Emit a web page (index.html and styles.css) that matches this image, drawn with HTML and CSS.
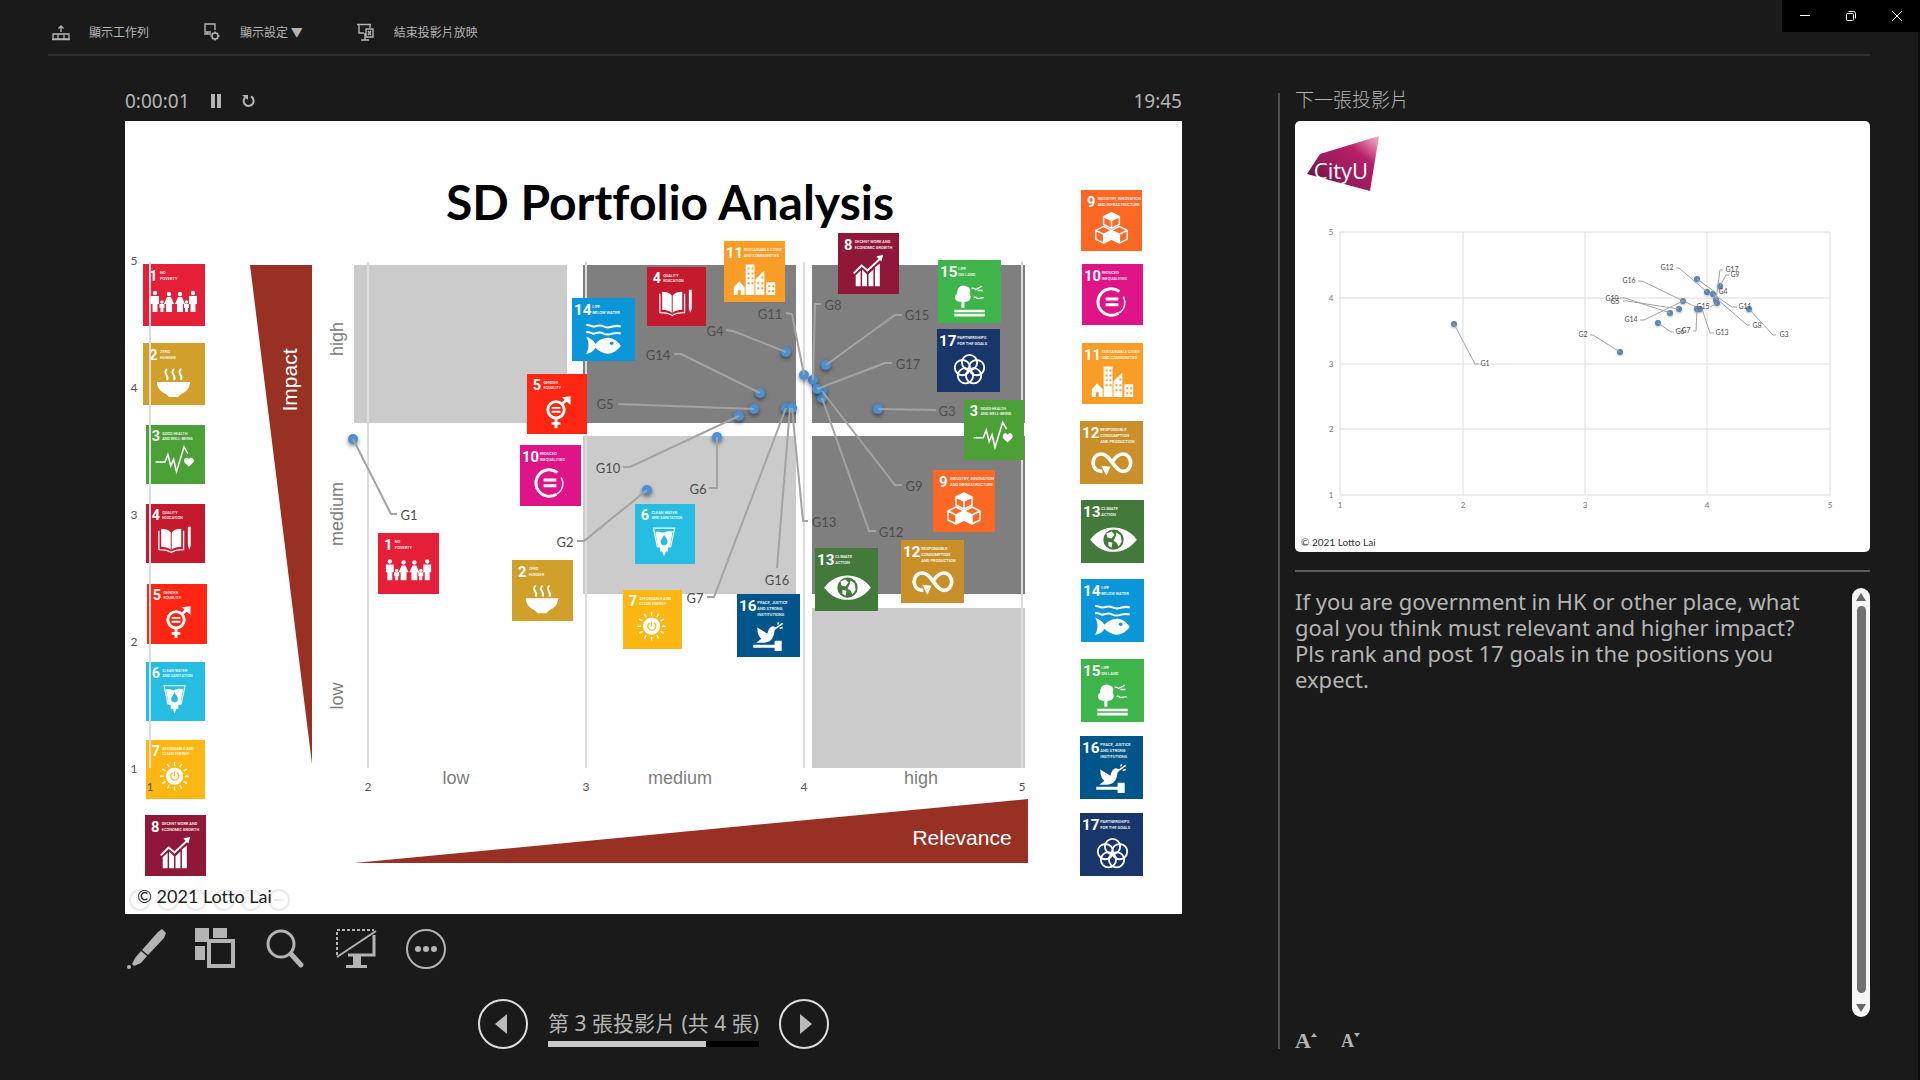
FILE: index.html
```html
<!DOCTYPE html>
<html lang="zh-Hant">
<head>
    <meta charset="UTF-8">
    <meta name="viewport" content="width=device-width, initial-scale=1.0">
    <title>SD Portfolio Analysis</title>
    <link rel="stylesheet" href="styles.css">
</head>
<body>
    <!-- Goal pictograms, each drawn on a 62 x 62 tile -->
    <svg class="sprites" aria-hidden="true">
        <symbol id="goal-1" viewBox="0 0 62 62">
            <g fill="#fff">
                <circle cx="12" cy="29" r="2.2"/><circle cx="26" cy="30" r="2.2"/><circle cx="37" cy="30" r="2.2"/><circle cx="50" cy="29" r="2.2"/>
                <circle cx="19" cy="38" r="1.7"/><circle cx="43.500" cy="38" r="1.700"/>
                <path d="M8 32h8v8h-1.500v8h-5v-8H8zM24 33h4l3 7h-2v8h-6v-8h-2zM35 33h4l3 7h-2v8h-6v-8h-2zM46 32h8v8h-1.500v8h-5v-8H46zM16.500 40h5v4h-1v4h-3v-4h-1zM41 40h5v4h-1v4h-3v-4h-1z"/>
            </g>
        </symbol>
        <symbol id="goal-2" viewBox="0 0 62 62">
            <path fill="#fff" d="M14 39h33c0 6-4 10-9 12l-3 3h-9l-3-3c-5-2-9-6-9-12z"/>
            <path fill="none" stroke="#fff" stroke-width="2" d="M24 26c-5 5 3 6 0 11M31 26c-5 5 3 6 0 11M38 26c-5 5 3 6 0 11"/>
        </symbol>
        <symbol id="goal-3" viewBox="0 0 62 62">
            <path fill="none" stroke="#fff" stroke-width="1.600" d="M10 39h10l3-8 3 12 3-7 3 13 8-26 4 7"/>
            <path fill="#fff" d="M45 44l-4-4c-3-4 2-8 4-4 2-4 8 0 4 4z"/>
        </symbol>
        <symbol id="goal-4" viewBox="0 0 62 62">
            <path fill="#fff" d="M16 26c4 0 8 1 10 4v18c-3-2-6-3-10-3zM37 26c-4 0-8 1-10 4v18c3-2 6-3 10-3zM44 24h3v20l-1.500 4-1.500-4z"/>
            <path fill="none" stroke="#fff" stroke-width="1.400" d="M13.500 28v20c5 0 9 0 13 3 4-3 8-3 13-3V28"/>
        </symbol>
        <symbol id="goal-5" viewBox="0 0 62 62">
            <g fill="none" stroke="#fff" stroke-width="3">
                <circle cx="30" cy="37" r="8.500"/>
                <path d="M36 31l7-6M30 46v10M25.500 51h9"/>
            </g>
            <path fill="#fff" d="M36 24l9-1v9zM25.500 34h9v2h-9zM25.500 38h9v2h-9z"/>
        </symbol>
        <symbol id="goal-6" viewBox="0 0 62 62">
            <path fill="none" stroke="#fff" stroke-width="1.200" d="M19 25h22l-4 19H23z"/>
            <path fill="#fff" d="M21 29c4-2 6 2 10 0s5 0 8-1l-3 17h-2v4h-2l-2 5-2-5h-2v-4h-2z"/>
            <path fill="#26bde2" d="M30 32c2 3 4 5 3.500 7a3.500 3.500 0 0 1-7 0c0-2 2-4 3.500-7z"/>
        </symbol>
        <symbol id="goal-7" viewBox="0 0 62 62">
            <circle cx="30" cy="38" r="9" fill="#fff"/>
            <g fill="none" stroke="#fcb713" stroke-width="1.300"><path d="M28 34.500a4.200 4.200 0 1 0 4.500 0M30 33v5"/></g>
            <path stroke="#fff" stroke-width="1.500" d="M30 27v-4M30 49v4M19 38h-4M41 38h4M24.500 28.500l-2-3.500M35.500 28.500l2-3.500M24.500 47.500l-2 3.500M35.500 47.500l2 3.500M20.500 32.500l-3.500-2M39.500 32.500l3.500-2M20.500 43.500l-3.500 2M39.500 43.500l3.500 2"/>
        </symbol>
        <symbol id="goal-8" viewBox="0 0 62 62">
            <path fill="#fff" d="M18 43l5-5v16h-5zM24.500 37l5 5v12h-5zM31 42l5-5v17h-5zM37.500 35l5-4v23h-5z"/>
            <path fill="none" stroke="#fff" stroke-width="2" d="M16 41l8-8 6 5 13-12"/>
            <path fill="#fff" d="M39 24l7-2-2 7z"/>
        </symbol>
        <symbol id="goal-9" viewBox="0 0 62 62">
            <g fill="none" stroke="#fff" stroke-width="1.500" stroke-linejoin="round">
                <path d="M31 23l8 4v8l-8 4-8-4v-8zM23 27l8 4 8-4M31 31v8M23 37l8 4v9l-8 4-8-4v-9zM15 41l8 4 8-4M23 45v9M39 37l8 4v9l-8 4-8-4v-9zM31 41l8 4 8-4M39 45v9"/>
            </g>
            <path fill="#fff" d="M31 23l8 4-8 4-8-4zM23 45l8-4v9l-8 4zM31 41l8 4v9l-8-4z"/>
        </symbol>
        <symbol id="goal-10" viewBox="0 0 62 62">
            <path fill="none" stroke="#fff" stroke-width="3" d="M38 28a13.500 13.500 0 1 0-1 22"/>
            <path fill="none" stroke="#fff" stroke-width="1.500" d="M37 50c7-4 8-11 5-17"/>
            <path fill="#fff" d="M24 34h13v3H24zM24 40h13v3H24z"/>
        </symbol>
        <symbol id="goal-11" viewBox="0 0 62 62">
            <path fill="#fff" fill-rule="evenodd" d="M10 47l5.500-6 5.500 6v8h-4v-5h-3v5h-4zM22 24h9v31h-9zM32 39l9-9v25h-9zM43 42h9v13h-9zM24 27v2h2v-2zM28 27v2h2v-2zM24 32v2h2v-2zM28 32v2h2v-2zM24 37v2h2v-2zM28 37v2h2v-2zM24 42v2h2v-2zM28 42v2h2v-2zM34 42v2h2v-2zM38 42v2h2v-2zM34 47v2h2v-2zM38 47v2h2v-2zM38 36v2h2v-2zM45 45v2h2v-2zM49 45v2h2v-2zM45 50v2h2v-2zM49 50v2h2v-2z"/>
        </symbol>
        <symbol id="goal-12" viewBox="0 0 62 62">
            <path fill="none" stroke="#fff" stroke-width="3.600" d="M22 49.500c-12 1-12-17-1-17 9 0 13 17 21 17 11 0 10-17 0-17-5 0-8 4-11 9"/>
            <path fill="#fff" d="M21 44l9 1-4 9z"/>
        </symbol>
        <symbol id="goal-13" viewBox="0 0 62 62">
            <path fill="#fff" d="M9 39c12-16 34-16 46 0-12 16-34 16-46 0z"/>
            <circle cx="32" cy="39" r="10" fill="#44793c"/>
            <path fill="#fff" d="M25 33l5-2 3 3-3 4-4-1zM35 32l4 3 1 6-3 5-2-4-3-2 2-4zM27 41l4 1-1 5-3-2z"/>
        </symbol>
        <symbol id="goal-14" viewBox="0 0 62 62">
            <path fill="none" stroke="#fff" stroke-width="2" d="M14 27c3-2 4 2 8 1s5-2 9 0 5 1 9 0 5-1 8 0M14 34c3-2 4 2 8 1s5-2 9 0 5 1 9 0 5-1 8 0"/>
            <path fill="#fff" d="M14 38c5 2 8 5 9 7 8-8 18-8 25 2-7 10-17 10-25 2-1 3-4 5-9 6 3-6 3-11 0-17z"/>
            <circle cx="39" cy="44.500" r="1.800" fill="#0a97d9"/>
        </symbol>
        <symbol id="goal-15" viewBox="0 0 62 62">
            <path fill="#fff" d="M23 47v-6c-7 1-8-6-4-8-1-6 5-10 9-7 5 1 4 6 3 7 3 4 0 9-5 8v6zM16 49h30v2.500H16zM16 53h30v2.500H16z"/>
            <path fill="none" stroke="#fff" stroke-width="1.300" d="M33 28c2-1 3 0 4 1l6-3M35 37c2-1 3 0 4 1l6-1M39 30l5 0"/>
        </symbol>
        <symbol id="goal-16" viewBox="0 0 62 62">
            <path fill="#fff" d="M20 33l10 6c1-5 4-8 6-7l4 1-3 3c-1 9-5 12-11 12h-7l5-4c-3-2-4-6-4-11zM16 50h21v-4h7v10h-7v-3H16z"/>
            <path fill="none" stroke="#fff" stroke-width="1.500" d="M39 33l6-4M42 34l3-1M40 30l1-2"/>
        </symbol>
        <symbol id="goal-17" viewBox="0 0 62 62">
            <g fill="none" stroke="#fff" stroke-width="1.800">
                <circle cx="32" cy="33" r="7.500"/><circle cx="39" cy="38" r="7.500"/><circle cx="36" cy="46" r="7.500"/><circle cx="28" cy="46" r="7.500"/><circle cx="25" cy="38" r="7.500"/>
            </g>
        </symbol>
    </svg>

    <header class="topbar">
        <nav class="commands">
            <button class="command">
                <svg width="18" height="18" viewBox="0 0 18 18" fill="none" stroke="currentColor"><path stroke-width="1.300" d="M1 11h16v5H1zM6 11v5M12 11v5M0 16.500h18M9 9V3M6.500 5.500L9 3l2.500 2.500"/></svg>
                <span>顯示工作列</span>
            </button>
            <button class="command">
                <svg width="18" height="18" viewBox="0 0 18 18" fill="none" stroke="currentColor" stroke-width="1.400"><path d="M8 9H2V1h10v6M1 11h7M4 9v2"/><circle cx="12" cy="13" r="3"/><path stroke-width="1.600" d="M12 8.500v1.500M12 16v1.500M7.500 13H9M15 13h1.500M9 10l1 1M14 15l1 1M15 10l-1 1M10 15l-1 1"/></svg>
                <span>顯示設定 ▼</span>
            </button>
            <button class="command">
                <svg width="18" height="18" viewBox="0 0 18 18" fill="none" stroke="currentColor" stroke-width="1.400"><path d="M0 1.500h14M2 2v8h5M13 2v3M4 17h8M8 10v7M9 6h7v8H9zM11 8l3 4M14 8l-3 4"/></svg>
                <span>結束投影片放映</span>
            </button>
        </nav>
        <div class="window-buttons">
            <button aria-label="最小化"><svg width="12" height="12" viewBox="0 0 12 12"><path d="M1 5.500h10" stroke="#fff"/></svg></button>
            <button aria-label="還原"><svg width="12" height="12" viewBox="0 0 12 12" fill="none" stroke="#fff"><rect x="1.500" y="3.500" width="7" height="7" rx="1"/><path d="M3.500 1.500h5a2 2 0 0 1 2 2v5"/></svg></button>
            <button aria-label="關閉"><svg width="12" height="12" viewBox="0 0 12 12"><path d="M1 1l10 10M11 1L1 11" stroke="#fff"/></svg></button>
        </div>
    </header>

    <main class="presenter">
        <section class="current">
            <div class="status">
                <span>0:00:01</span>
                <button aria-label="暫停"><svg width="10" height="14" viewBox="0 0 10 14"><path fill="currentColor" d="M0 0h4v14H0zM6 0h4v14H6z"/></svg></button>
                <button aria-label="重新開始"><svg width="14" height="14" viewBox="0 0 14 14" fill="none" stroke="currentColor" stroke-width="2"><path d="M9 2.500a5 5 0 1 1-6 1"/><path fill="currentColor" stroke="none" d="M0 1h6v5z"/></svg></button>
                <span class="clock">19:45</span>
            </div>

            <svg class="slide" id="slide" viewBox="0 0 1057 793">
                <g class="ghost">
                    <circle cx="15" cy="779" r="10"/><circle cx="43" cy="779" r="10"/><circle cx="71" cy="779" r="10"/>
                    <circle cx="99" cy="779" r="10"/><circle cx="126" cy="779" r="10"/><circle cx="154" cy="779" r="10"/>
                    <path d="M149 779h10"/>
                </g>
                <text class="slide-title" x="545" y="99">SD Portfolio Analysis</text>
                <text class="copyright" x="12" y="782">© 2021 Lotto Lai</text>

                <g class="zone-light">
                    <rect x="229" y="144" width="213" height="158"/>
                    <rect x="458" y="315" width="213" height="158"/>
                    <rect x="687" y="487" width="213" height="160"/>
                </g>
                <g class="zone-dark">
                    <rect x="458" y="144" width="213" height="158"/>
                    <rect x="687" y="144" width="213" height="158"/>
                    <rect x="687" y="315" width="213" height="158"/>
                </g>
                <path class="wedge" d="M125 144h62v499zM229 742l674-64v64z"/>
                <text class="wedge-label" transform="translate(172 259) rotate(-90)">Impact</text>
                <text class="wedge-label" x="837" y="724">Relevance</text>

                <g class="band">
                    <text x="331" y="663">low</text>
                    <text x="555" y="663">medium</text>
                    <text x="796" y="663">high</text>
                    <text transform="translate(218 218) rotate(-90)">high</text>
                    <text transform="translate(218 393) rotate(-90)">medium</text>
                    <text transform="translate(218 575) rotate(-90)">low</text>
                </g>
                <g id="side-goals"></g>
                <path class="grid-line" d="M25 141v506M243 141v506M461 141v506M679 141v506M897 141v506"/>
                <g class="axis">
                    <text x="9" y="144">5</text><text x="9" y="271">4</text><text x="9" y="398">3</text><text x="9" y="525">2</text><text x="9" y="652">1</text>
                    <text x="25" y="670">1</text><text x="243" y="670">2</text><text x="461" y="670">3</text><text x="679" y="670">4</text><text x="897" y="670">5</text>
                </g>
                <g id="slide-points"></g>
                <g id="chart-goals"></g>
            </svg>

            <div class="tools">
                <button aria-label="筆"><svg width="42" height="42" viewBox="0 0 42 42" fill="currentColor"><path d="M37 1l4 4-2 5-16 17-6-5L33 4zM16 23l6 5-6 7-7 3-2-2 3-6z"/><circle cx="4" cy="39" r="2"/></svg></button>
                <button aria-label="所有投影片"><svg width="42" height="42" viewBox="0 0 42 42" fill="currentColor"><path d="M0 0h14v14H0zM18 0h14v10H18zM0 18h10v14H0z"/><path fill-rule="evenodd" d="M12 11h28v29H12zM16 15v21h20V15z"/></svg></button>
                <button aria-label="放大"><svg width="42" height="42" viewBox="0 0 42 42" fill="none" stroke="currentColor"><circle cx="16" cy="16" r="13" stroke-width="3"/><path stroke-width="5" stroke-linecap="round" d="M26 26l10 11"/></svg></button>
                <button aria-label="黑畫面"><svg width="42" height="42" viewBox="0 0 42 42" fill="none" stroke="currentColor"><path stroke-width="2" stroke-dasharray="3 2" d="M2 27V2h37"/><path stroke-width="2" d="M2 29L41 3"/><path stroke-width="3" d="M39 7v20H13"/><path fill="currentColor" stroke="none" d="M18 27h8v10h6v3H11v-3h7z"/></svg></button>
                <button aria-label="更多"><svg width="42" height="42" viewBox="0 0 42 42" fill="none" stroke="currentColor"><circle cx="21" cy="21" r="19" stroke-width="2"/><g fill="currentColor" stroke="none"><circle cx="13" cy="21" r="3"/><circle cx="21" cy="21" r="3"/><circle cx="29" cy="21" r="3"/></g></svg></button>
            </div>

            <div class="pager">
                <button aria-label="上一張"><svg width="50" height="50" viewBox="0 0 50 50"><circle cx="25" cy="25" r="24" fill="none" stroke="#ddd" stroke-width="2"/><path fill="#bbb" d="M29 15v20L17 25z"/></svg></button>
                <div class="position">
                    <span>第 3 張投影片 (共 4 張)</span>
                    <progress value="3" max="4" aria-label="投影片進度"></progress>
                </div>
                <button aria-label="下一張"><svg width="50" height="50" viewBox="0 0 50 50"><circle cx="25" cy="25" r="24" fill="none" stroke="#ddd" stroke-width="2"/><path fill="#bbb" d="M21 15v20l12-10z"/></svg></button>
            </div>
        </section>

        <aside class="side">
            <h2>下一張投影片</h2>
            <svg class="next-slide" viewBox="0 0 575 431">
                <defs>
                    <linearGradient id="logo-fill" x1="1" y1="0" x2="0" y2="1">
                        <stop offset="0" stop-color="#f3b6d2"/>
                        <stop offset="0.3" stop-color="#b71f67"/>
                        <stop offset="0.6" stop-color="#9c1a5a"/>
                        <stop offset="1" stop-color="#4c1233"/>
                    </linearGradient>
                </defs>
                <path fill="url(#logo-fill)" d="M84 15L75 70 12 53 25 33z"/>
                <text class="logo-text" x="46" y="58">CityU</text>
                <path class="next-grid" d="M45 111h490v263H45zM45 177h490M45 243h490M45 308h490M168 111v263M290 111v263M412 111v263"/>
                <g class="next-axis">
                    <text x="36" y="114">5</text><text x="36" y="180">4</text><text x="36" y="246">3</text><text x="36" y="311">2</text><text x="36" y="377">1</text>
                    <text x="45" y="387">1</text><text x="168" y="387">2</text><text x="290" y="387">3</text><text x="412" y="387">4</text><text x="535" y="387">5</text>
                </g>
                <g id="next-points"></g>
                <text class="next-copyright" x="6" y="425">© 2021 Lotto Lai</text>
            </svg>
            <hr>
            <div class="notes">
                <p>If you are government in HK or other place, what goal you think must relevant and higher impact? Pls rank and post 17 goals in the positions you expect.</p>
                <div class="scrollbar">
                    <button aria-label="向上捲動"><svg width="10" height="8" viewBox="0 0 10 8"><path fill="#666" d="M5 0l5 8H0z"/></svg></button>
                    <div class="scroll-thumb"></div>
                    <button aria-label="向下捲動"><svg width="10" height="8" viewBox="0 0 10 8"><path fill="#666" d="M0 0h10L5 8z"/></svg></button>
                </div>
            </div>
            <div class="text-size">
                <button class="larger" aria-label="放大文字">A<svg width="6" height="4" viewBox="0 0 6 4"><path fill="currentColor" d="M3 0l3 4H0z"/></svg></button>
                <button class="smaller" aria-label="縮小文字">A<svg width="6" height="4" viewBox="0 0 6 4"><path fill="currentColor" d="M0 0h6L3 4z"/></svg></button>
            </div>
        </aside>
    </main>
    <script src="script.js"></script>
</body>
</html>
```

FILE: styles.css
```css
* {
    box-sizing: border-box;
    margin: 0;
    padding: 0;
}

body {
    font-family: "Noto Sans", "Noto Sans CJK TC", sans-serif;
    background-color: #1a1a1a;
    color: #b4b4b4;
    min-height: 100vh;
    display: flex;
    flex-direction: column;
    box-shadow: inset -2px 0 #0c0c0c;
}

button {
    background: none;
    border: none;
    color: inherit;
    font: inherit;
    cursor: pointer;
    display: flex;
    align-items: center;
    justify-content: center;
}

svg {
    display: block;
}

.sprites {
    position: absolute;
    width: 0;
    height: 0;
}

/* Top bar */
.topbar {
    display: flex;
    justify-content: space-between;
    align-items: flex-start;
    height: 56px;
    position: relative;
}

.topbar::after {
    content: "";
    position: absolute;
    left: 48px;
    right: 50px;
    bottom: 0;
    height: 2px;
    background-color: #2f2f2f;
}

.commands {
    display: flex;
    gap: 54px;
    padding: 23px 0 0 52px;
}

.command {
    gap: 19px;
    font-family: "Noto Sans CJK TC", sans-serif;
    font-size: 12px;
    line-height: 18px;
}

.window-buttons {
    display: flex;
    background-color: #000;
}

.window-buttons button {
    width: 46px;
    height: 32px;
}

/* Main two column area */
.presenter {
    flex: 1;
    display: grid;
    grid-template-columns: minmax(0, 1057fr) minmax(0, 592fr);
    gap: 96px;
    padding: 37px 50px 31px 125px;
}

.current {
    display: flex;
    flex-direction: column;
}

.status {
    display: flex;
    align-items: flex-start;
    height: 28px;
    font-size: 19px;
    line-height: 16px;
}

.status button {
    margin-left: 21px;
    height: 16px;
}

.clock {
    margin-left: auto;
}

.slide {
    width: 100%;
    height: auto;
    background-color: #fff;
    font-variant-ligatures: none;
}

.slide-title {
    font-family: Lato, sans-serif;
    font-size: 48px;
    font-weight: bold;
    text-anchor: middle;
}

.copyright {
    font-family: Lato, sans-serif;
    font-size: 18px;
    fill: #222;
}

.ghost {
    fill: none;
    stroke: #ebebeb;
    stroke-width: 2;
}

.zone-light {
    fill: #cbcbcb;
}

.zone-dark {
    fill: #7f7f7f;
}

.wedge {
    fill: #983124;
}

.wedge-label {
    font: 21px "Liberation Sans", Arial, sans-serif;
    fill: #fff;
    text-anchor: middle;
}

.band {
    font: 18px "Liberation Sans", Arial, sans-serif;
    fill: #7d7d7d;
    text-anchor: middle;
}

.grid-line {
    fill: none;
    stroke: #dcdcdc;
    stroke-width: 2;
}

.axis {
    font: 12px Lato, sans-serif;
    fill: #555;
    text-anchor: middle;
}

.goal-number {
    font: bold 15px Roboto, sans-serif;
    fill: #fff;
}

.goal-name {
    font: 500 4px Roboto, sans-serif;
    fill: #fff;
}

.leader {
    fill: none;
    stroke: #a3a3a3;
    stroke-width: 2;
}

.dot {
    fill: #4a90d2;
    filter: drop-shadow(0 2px 2px rgba(0, 0, 0, 0.5));
}

.point-label {
    font: 13px Lato, sans-serif;
    fill: #4d4d4d;
    text-anchor: middle;
}

/* Slide tools */
.tools {
    display: flex;
    gap: 28px;
    margin-top: 14px;
}

.pager {
    display: flex;
    justify-content: center;
    align-items: center;
    gap: 20px;
    margin-top: 29px;
}

.position {
    display: flex;
    flex-direction: column;
    gap: 5px;
    padding-top: 9px;
    font-size: 21px;
    line-height: 26px;
}

progress {
    appearance: none;
    width: 100%;
    height: 6px;
    border: none;
}

progress::-webkit-progress-bar {
    background-color: #000;
}

progress::-webkit-progress-value {
    background-color: #c8c8c8;
}

/* Next slide and notes */
.side {
    display: flex;
    flex-direction: column;
    border-left: 2px solid #4d4d4d;
    padding-left: 15px;
}

.side h2 {
    height: 28px;
    font-size: 19px;
    font-weight: 300;
    line-height: 14px;
}

.next-slide {
    width: 100%;
    height: auto;
    background-color: #fff;
    border-radius: 5px;
}

.logo-text {
    font: 22px "Open Sans", sans-serif;
    fill: #fff;
    text-anchor: middle;
}

.next-grid {
    fill: none;
    stroke: #dedede;
    stroke-width: 1;
}

.next-axis {
    font: 8px Lato, sans-serif;
    fill: #777;
    text-anchor: middle;
}

.next-copyright {
    font: 10px Lato, sans-serif;
    fill: #333;
}

#next-points .leader {
    stroke-width: 1;
}

#next-points .dot {
    fill: #5b86b3;
    filter: drop-shadow(0 1px 1px rgba(0, 0, 0, 0.3));
}

#next-points .point-label {
    font-size: 7px;
}

.side hr {
    border: none;
    height: 2px;
    background-color: #5a5a5a;
    margin: 18px 0 16px;
}

.notes {
    flex: 1;
    display: flex;
    justify-content: space-between;
    gap: 36px;
    font-size: 22px;
    line-height: 26px;
}

.scrollbar {
    flex: none;
    display: flex;
    flex-direction: column;
    align-items: center;
    gap: 5px;
    width: 18px;
    padding: 5px 0;
    border-radius: 9px;
    background-color: #f5f5f5;
}

.scrollbar button {
    height: 8px;
}

.scroll-thumb {
    flex: 1;
    width: 9px;
    margin-bottom: 6px;
    border-radius: 5px;
    background-color: #707070;
}

.text-size {
    display: flex;
    align-items: flex-end;
    gap: 24px;
    height: 20px;
    margin-top: 12px;
    font-family: "Liberation Serif", serif;
    font-weight: bold;
    line-height: 16px;
}

.text-size button {
    align-items: flex-start;
}

.larger {
    font-size: 22px;
}

.smaller {
    font-size: 18px;
}
```

FILE: script.js
```js
const SVG = 'http://www.w3.org/2000/svg';

const goals = {
    1: { color: '#e51f38', name: ['NO', 'POVERTY'] },
    2: { color: '#d0a02b', name: ['ZERO', 'HUNGER'] },
    3: { color: '#4ba036', name: ['GOOD HEALTH', 'AND WELL-BEING'] },
    4: { color: '#c5192d', name: ['QUALITY', 'EDUCATION'] },
    5: { color: '#ff2613', name: ['GENDER', 'EQUALITY'] },
    6: { color: '#26bde2', name: ['CLEAN WATER', 'AND SANITATION'] },
    7: { color: '#fcb713', name: ['AFFORDABLE AND', 'CLEAN ENERGY'] },
    8: { color: '#8f1838', name: ['DECENT WORK AND', 'ECONOMIC GROWTH'] },
    9: { color: '#fd6925', name: ['INDUSTRY, INNOVATION', 'AND INFRASTRUCTURE'] },
    10: { color: '#e01489', name: ['REDUCED', 'INEQUALITIES'] },
    11: { color: '#fa9d27', name: ['SUSTAINABLE CITIES', 'AND COMMUNITIES'] },
    12: { color: '#c9902a', name: ['RESPONSIBLE', 'CONSUMPTION', 'AND PRODUCTION'] },
    13: { color: '#44793c', name: ['CLIMATE', 'ACTION'] },
    14: { color: '#0a97d9', name: ['LIFE', 'BELOW WATER'] },
    15: { color: '#3db54a', name: ['LIFE', 'ON LAND'] },
    16: { color: '#00568b', name: ['PEACE, JUSTICE', 'AND STRONG', 'INSTITUTIONS'] },
    17: { color: '#19366a', name: ['PARTNERSHIPS', 'FOR THE GOALS'] }
};

// [goal, x, y, size]
const sideGoals = [
    [1, 18, 143, 62], [2, 18, 222, 62], [3, 21, 304, 59], [4, 21, 383, 59],
    [5, 22, 463, 60], [6, 21, 541, 59], [7, 21, 619, 59], [8, 20, 694, 61],
    [9, 956, 69, 61], [10, 957, 143, 61], [11, 957, 222, 61], [12, 955, 300, 63], [13, 956, 379, 63],
    [14, 956, 458, 63], [15, 956, 538, 63], [16, 955, 615, 63], [17, 955, 692, 63]
];

const chartGoals = [
    [14, 447, 177, 63], [4, 522, 146, 59], [11, 599, 120, 61], [8, 713, 112, 61],
    [15, 813, 139, 63], [17, 812, 208, 63], [3, 839, 279, 60], [5, 402, 253, 60],
    [10, 395, 324, 61], [2, 387, 439, 61], [6, 510, 383, 60], [7, 498, 469, 59],
    [16, 612, 473, 63], [9, 808, 349, 62], [12, 776, 419, 63], [13, 690, 427, 63], [1, 253, 412, 61]
];

// [label, label x, label y, leader line]
const slideLabels = [
    ['G1', 284, 394, '228,318 266,393 272,393'],
    ['G2', 440, 421, '452,420 459,420 522,369'],
    ['G3', 822, 290, '811,289 753,288'],
    ['G4', 590, 210, '601,209 608,210 661,231'],
    ['G5', 480, 283, '493,283 629,288'],
    ['G6', 573, 368, '584,367 592,367 592,316'],
    ['G7', 570, 477, '582,476 589,476 661,287'],
    ['G8', 708, 184, '696,183 690,183 688,259'],
    ['G9', 789, 365, '777,364 770,364 697,270'],
    ['G10', 483, 347, '498,346 505,346 614,295'],
    ['G11', 645, 193, '661,192 667,193 679,254'],
    ['G12', 766, 411, '751,410 744,410 697,277'],
    ['G13', 699, 401, '683,400 678,400 667,287'],
    ['G14', 533, 234, '549,233 556,233 635,272'],
    ['G15', 792, 194, '777,194 770,194 701,244'],
    ['G16', 652, 459, '652,447 665,287'],
    ['G17', 783, 243, '767,242 760,242 692,268']
];

const slideDots = [
    [228, 318], [522, 369], [753, 288], [661, 231], [629, 288], [592, 316], [661, 287], [667, 287],
    [688, 259], [697, 270], [614, 295], [679, 254], [697, 277], [635, 272], [701, 244], [692, 268]
];

const nextLabels = [
    ['G1', 190, 243, '159,203 180,243 184,243'],
    ['G2', 288, 214, '295,214 298,214 325,231'],
    ['G12', 372, 147, '381,147 384,147 412,171'],
    ['G16', 334, 160, '343,160 347,160 405,188'],
    ['G10', 317, 178, '325,177 330,177 375,192'],
    ['G5', 320, 181, '328,180 332,180 384,188'],
    ['G14', 336, 199, '345,199 349,199 388,180'],
    ['G17', 437, 149, '428,149 425,149 421,179'],
    ['G9', 440, 154, '434,154 431,154 425,165'],
    ['G4', 428, 171, '420,171 402,158'],
    ['G15', 408, 186, '415,186 422,182'],
    ['G11', 450, 186, '442,186 437,186 418,173'],
    ['G8', 462, 205, '455,204 452,204 422,178'],
    ['G3', 489, 214, '481,214 478,214 454,188'],
    ['G6', 385, 211, '379,211 376,211 363,202'],
    ['G7', 391, 210, '398,210 401,210 402,188'],
    ['G13', 427, 212, '419,212 415,212 407,188']
];

const nextDots = [
    [159, 203], [325, 231], [363, 202], [375, 192], [384, 188], [388, 180], [402, 158], [412, 171],
    [418, 173], [425, 165], [402, 188], [405, 188], [421, 179], [422, 182], [454, 188]
];

function add(parent, tag, attributes, text) {
    const node = document.createElementNS(SVG, tag);
    for (const key in attributes) {
        node.setAttribute(key, attributes[key]);
    }
    if (text) {
        node.textContent = text;
    }
    parent.appendChild(node);
    return node;
}

function drawGoals(id, list) {
    const layer = document.getElementById(id);
    list.forEach(([number, x, y, size]) => {
        const goal = goals[number];
        const tile = add(layer, 'svg', { x, y, width: size, height: size, viewBox: '0 0 62 62' });
        add(tile, 'rect', { width: 62, height: 62, fill: goal.color });
        add(tile, 'text', { class: 'goal-number', x: number > 9 ? 2 : 6, y: 17 }, String(number));
        goal.name.forEach((line, i) => {
            add(tile, 'text', { class: 'goal-name', x: number > 9 ? 20 : 17, y: 10 + i * 6 }, line);
        });
        add(tile, 'use', { href: '#goal-' + number, width: 62, height: 62 });
    });
}

function drawPoints(id, labels, dots, radius, drop) {
    const layer = document.getElementById(id);
    dots.forEach(([cx, cy]) => add(layer, 'circle', { class: 'dot', cx, cy, r: radius }));
    labels.forEach(([name, x, y, points]) => {
        add(layer, 'polyline', { class: 'leader', points });
        add(layer, 'text', { class: 'point-label', x, y: y + drop }, name);
    });
}

drawGoals('side-goals', sideGoals);
drawGoals('chart-goals', chartGoals);
drawPoints('slide-points', slideLabels, slideDots, 5, 5);
drawPoints('next-points', nextLabels, nextDots, 3, 2);
```
